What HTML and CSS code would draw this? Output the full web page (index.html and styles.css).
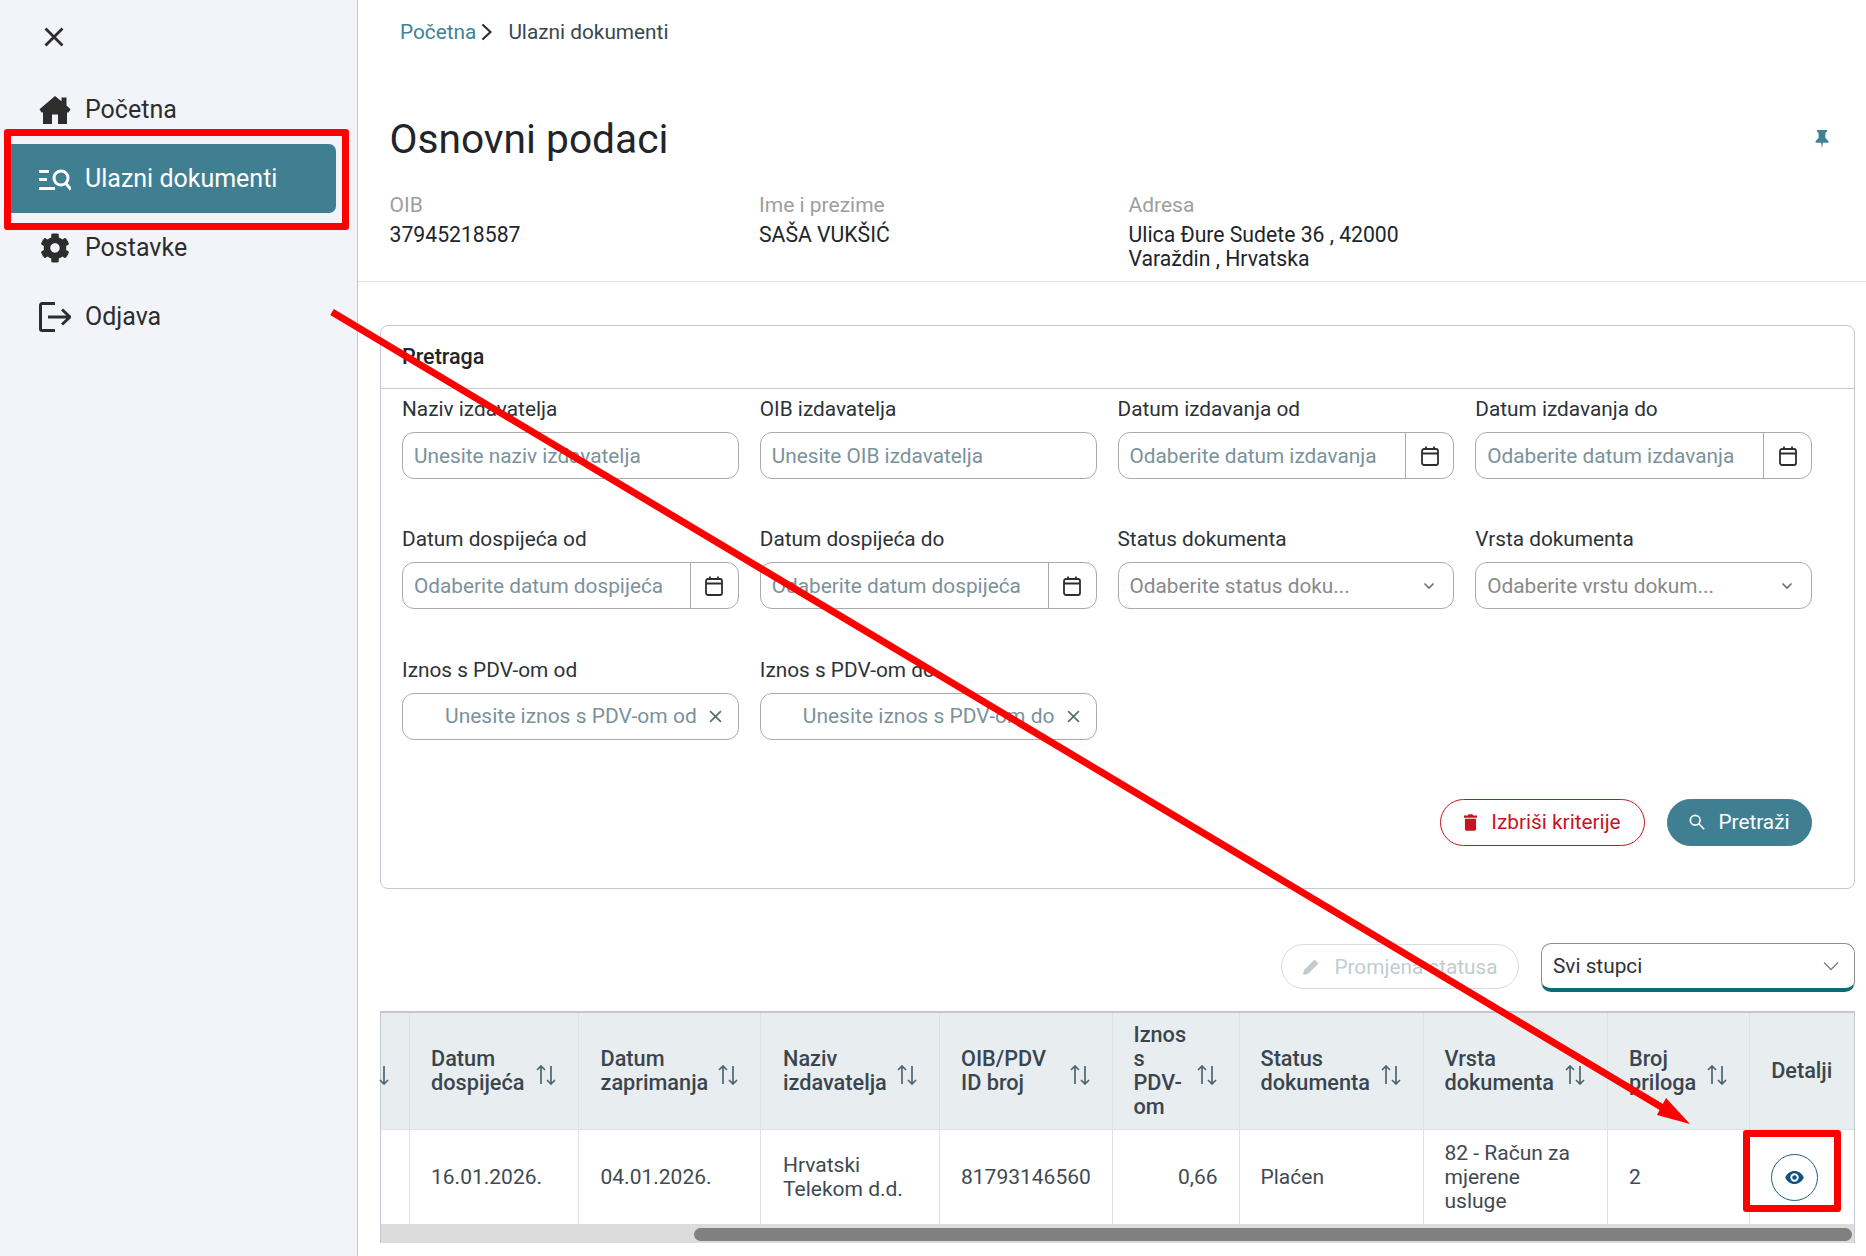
FILE: index.html
```html
<!DOCTYPE html>
<html lang="hr">
<head>
<meta charset="utf-8">
<title>Ulazni dokumenti</title>
<link rel="stylesheet" href="styles.css">
</head>
<body>
<aside class="sidebar">
  <button class="close-btn" aria-label="Zatvori">
    <svg class="ico-close" viewBox="0 0 20 20"><path d="M1.500 1.500 18.500 18.500M18.500 1.500 1.500 18.500"/></svg>
  </button>
  <nav class="nav">
    <a class="nav-item">
      <span class="nav-ico"><svg viewBox="0 0 32 28" class="solid"><path d="M16 0 .5 13.200 2.500 16.500H4V28h9v-9.500h6V28h9V16.500h1.500l2-3.300L27.500 9.400V1.500h-5v3.700Z"/></svg></span>
      <span>Početna</span>
    </a>
    <a class="nav-item active">
      <span class="nav-ico"><svg viewBox="0 0 32 26" class="line-white"><path d="M0 5.500h10M0 13.500h8M0 22.500h16"/><circle cx="22" cy="12" r="7"/><path d="M26.500 17 32 23.500"/></svg></span>
      <span>Ulazni dokumenti</span>
    </a>
    <a class="nav-item">
      <span class="nav-ico"><svg viewBox="0 0 512 512" class="solid gear"><path d="M487.400 315.700l-42.600-24.600c4.300-23.200 4.300-47 0-70.200l42.600-24.600c4.900-2.800 7.100-8.600 5.500-14-11.100-35.600-30-67.800-54.700-94.600-3.800-4.100-10-5.100-14.800-2.300L380.800 110c-17.900-15.400-38.500-27.300-60.800-35.100V25.800c0-5.600-3.900-10.500-9.400-11.700-36.700-8.200-74.300-7.800-109.200 0-5.500 1.200-9.400 6.100-9.400 11.700V75c-22.200 7.900-42.800 19.800-60.800 35.100L88.700 85.500c-4.900-2.800-11-1.900-14.800 2.300-24.700 26.700-43.600 58.900-54.700 94.600-1.700 5.400.6 11.200 5.500 14L67.300 221c-4.300 23.200-4.300 47 0 70.200l-42.600 24.600c-4.900 2.800-7.100 8.600-5.500 14 11.100 35.600 30 67.800 54.700 94.600 3.800 4.100 10 5.100 14.800 2.300l42.600-24.600c17.900 15.400 38.500 27.300 60.800 35.100v49.200c0 5.600 3.900 10.500 9.400 11.700 36.700 8.200 74.300 7.800 109.200 0 5.500-1.200 9.400-6.100 9.400-11.700v-49.200c22.200-7.900 42.800-19.800 60.800-35.100l42.600 24.600c4.900 2.800 11 1.900 14.800-2.300 24.700-26.700 43.600-58.900 54.700-94.600 1.500-5.500-.7-11.300-5.600-14.100zM256 336c-44.100 0-80-35.900-80-80s35.900-80 80-80 80 35.900 80 80-35.900 80-80 80z"/></svg></span>
      <span>Postavke</span>
    </a>
    <a class="nav-item">
      <span class="nav-ico"><svg viewBox="0 0 32 30" class="line-dark"><path d="M16 1.500H3a1.500 1.500 0 0 0-1.500 1.500v24a1.500 1.500 0 0 0 1.500 1.500h13"/><path d="M9 15h22M23 7.500 31 15l-8 7.500"/></svg></span>
      <span>Odjava</span>
    </a>
  </nav>
</aside>

<main class="main">
  <div class="breadcrumb">
    <a class="crumb-link">Početna</a>
    <svg class="crumb-sep" viewBox="0 0 11 18"><path d="M1.500 1.500 9.500 9l-8 7.500"/></svg>
    <span>Ulazni dokumenti</span>
  </div>

  <section class="basic">
    <div class="basic-head">
      <h1>Osnovni podaci</h1>
      <svg class="pin" viewBox="0 0 14 18"><path d="M2 0h10v1.600L10.400 3v5l3 3v1.800H8L7 18l-1-5.200H.600V11l3-3V3L2 1.600Z"/></svg>
    </div>
    <dl class="info">
      <div><dt>OIB</dt><dd>37945218587</dd></div>
      <div><dt>Ime i prezime</dt><dd>SAŠA VUKŠIĆ</dd></div>
      <div><dt>Adresa</dt><dd>Ulica Đure Sudete 36 , 42000<br>Varaždin , Hrvatska</dd></div>
    </dl>
  </section>

  <section class="card">
    <div class="card-head">Pretraga</div>
    <div class="card-body">
      <div class="form-grid">
        <div class="field">
          <label>Naziv izdavatelja</label>
          <div class="input"><span class="ph">Unesite naziv izdavatelja</span></div>
        </div>
        <div class="field">
          <label>OIB izdavatelja</label>
          <div class="input"><span class="ph">Unesite OIB izdavatelja</span></div>
        </div>
        <div class="field">
          <label>Datum izdavanja od</label>
          <div class="input date"><span class="ph">Odaberite datum izdavanja</span><span class="date-btn"><svg viewBox="0 0 18 20"><path d="M1 5a2 2 0 0 1 2-2h12a2 2 0 0 1 2 2v12a2 2 0 0 1-2 2H3a2 2 0 0 1-2-2ZM1 7.500h16M5 .5V4M13 .5V4"/></svg></span></div>
        </div>
        <div class="field">
          <label>Datum izdavanja do</label>
          <div class="input date"><span class="ph">Odaberite datum izdavanja</span><span class="date-btn"><svg viewBox="0 0 18 20"><path d="M1 5a2 2 0 0 1 2-2h12a2 2 0 0 1 2 2v12a2 2 0 0 1-2 2H3a2 2 0 0 1-2-2ZM1 7.500h16M5 .5V4M13 .5V4"/></svg></span></div>
        </div>
        <div class="field">
          <label>Datum dospijeća od</label>
          <div class="input date"><span class="ph">Odaberite datum dospijeća</span><span class="date-btn"><svg viewBox="0 0 18 20"><path d="M1 5a2 2 0 0 1 2-2h12a2 2 0 0 1 2 2v12a2 2 0 0 1-2 2H3a2 2 0 0 1-2-2ZM1 7.500h16M5 .5V4M13 .5V4"/></svg></span></div>
        </div>
        <div class="field">
          <label>Datum dospijeća do</label>
          <div class="input date"><span class="ph">Odaberite datum dospijeća</span><span class="date-btn"><svg viewBox="0 0 18 20"><path d="M1 5a2 2 0 0 1 2-2h12a2 2 0 0 1 2 2v12a2 2 0 0 1-2 2H3a2 2 0 0 1-2-2ZM1 7.500h16M5 .5V4M13 .5V4"/></svg></span></div>
        </div>
        <div class="field">
          <label>Status dokumenta</label>
          <div class="input select"><span class="ph grey">Odaberite status doku...</span><svg class="chev" viewBox="0 0 12 8"><path d="M1.500 1.500 6 6l4.500-4.500"/></svg></div>
        </div>
        <div class="field">
          <label>Vrsta dokumenta</label>
          <div class="input select"><span class="ph grey">Odaberite vrstu dokum...</span><svg class="chev" viewBox="0 0 12 8"><path d="M1.500 1.500 6 6l4.500-4.500"/></svg></div>
        </div>
        <div class="field">
          <label>Iznos s PDV-om od</label>
          <div class="input amount"><span class="ph">Unesite iznos s PDV-om od</span><svg class="clear" viewBox="0 0 12 12"><path d="M1 1 11 11M11 1 1 11"/></svg></div>
        </div>
        <div class="field">
          <label>Iznos s PDV-om do</label>
          <div class="input amount"><span class="ph">Unesite iznos s PDV-om do</span><svg class="clear" viewBox="0 0 12 12"><path d="M1 1 11 11M11 1 1 11"/></svg></div>
        </div>
      </div>
      <div class="form-actions">
        <button class="btn btn-danger"><svg viewBox="0 0 14 18"><path d="M5 0h4l1 1.500h4v2.300H0V1.500h4ZM1 5h12v11a2 2 0 0 1-2 2H3a2 2 0 0 1-2-2Z"/></svg>Izbriši kriterije</button>
        <button class="btn btn-primary"><svg viewBox="0 0 18 18"><circle cx="7" cy="7" r="5.500"/><path d="M11 11l6 6"/></svg>Pretraži</button>
      </div>
    </div>
  </section>

  <div class="toolbar">
    <button class="btn btn-disabled"><svg viewBox="0 0 18 18"><path d="M12.500 1.500 16.500 5.500 6 16 1 17 2 12Z"/></svg>Promjena statusa</button>
    <div class="columns-select"><span>Svi stupci</span><svg viewBox="0 0 16 10"><path d="M1 1.500 8 8.500l7-7"/></svg></div>
  </div>

  <section class="table">
    <div class="row head">
      <div class="cell first"><svg class="sort only-down" viewBox="0 0 10 20"><path d="M5 1v18M1 15l4 4 4-4"/></svg></div>
      <div class="cell"><span>Datum dospijeća</span><svg class="sort" viewBox="0 0 22 20"><path d="M6 19V1M2 5l4-4 4 4M16 1v18M12 15l4 4 4-4"/></svg></div>
      <div class="cell shift"><span>Datum zaprimanja</span><svg class="sort" viewBox="0 0 22 20"><path d="M6 19V1M2 5l4-4 4 4M16 1v18M12 15l4 4 4-4"/></svg></div>
      <div class="cell shift"><span>Naziv izdavatelja</span><svg class="sort" viewBox="0 0 22 20"><path d="M6 19V1M2 5l4-4 4 4M16 1v18M12 15l4 4 4-4"/></svg></div>
      <div class="cell"><span>OIB/PDV ID broj</span><svg class="sort" viewBox="0 0 22 20"><path d="M6 19V1M2 5l4-4 4 4M16 1v18M12 15l4 4 4-4"/></svg></div>
      <div class="cell"><span>Iznos s PDV-om</span><svg class="sort" viewBox="0 0 22 20"><path d="M6 19V1M2 5l4-4 4 4M16 1v18M12 15l4 4 4-4"/></svg></div>
      <div class="cell"><span>Status dokumenta</span><svg class="sort" viewBox="0 0 22 20"><path d="M6 19V1M2 5l4-4 4 4M16 1v18M12 15l4 4 4-4"/></svg></div>
      <div class="cell"><span>Vrsta dokumenta</span><svg class="sort" viewBox="0 0 22 20"><path d="M6 19V1M2 5l4-4 4 4M16 1v18M12 15l4 4 4-4"/></svg></div>
      <div class="cell"><span>Broj priloga</span><svg class="sort" viewBox="0 0 22 20"><path d="M6 19V1M2 5l4-4 4 4M16 1v18M12 15l4 4 4-4"/></svg></div>
      <div class="cell center">Detalji</div>
    </div>
    <div class="row body">
      <div class="cell first"></div>
      <div class="cell">16.01.2026.</div>
      <div class="cell shift">04.01.2026.</div>
      <div class="cell shift">Hrvatski Telekom d.d.</div>
      <div class="cell">81793146560</div>
      <div class="cell end">0,66</div>
      <div class="cell">Plaćen</div>
      <div class="cell tight">82 - Račun za mjerene usluge</div>
      <div class="cell">2</div>
      <div class="cell center"><button class="eye-btn" aria-label="Detalji"><svg viewBox="0 0 20 14"><path fill-rule="evenodd" d="M10 0C5.500 0 1.800 2.800 0 7c1.800 4.200 5.500 7 10 7s8.200-2.800 10-7c-1.800-4.200-5.500-7-10-7Zm0 11.500a4.500 4.500 0 1 1 0-9 4.500 4.500 0 0 1 0 9Zm0-7a2.500 2.500 0 1 0 0 5 2.500 2.500 0 0 0 0-5Z"/></svg></button></div>
    </div>
    <div class="scrollbar"><div class="thumb"></div></div>
  </section>
</main>

<div class="mark mark-nav"></div>
<div class="mark mark-eye"></div>
<svg class="arrow" viewBox="0 0 1866 1256"><path class="arrow-line" d="M332 312 1668 1111"/><path class="arrow-head" d="M1690 1124 1657 1115 1666 1098Z"/></svg>
</body>
</html>
```
FILE: styles.css
```css
* { box-sizing: border-box; }
html, body { margin: 0; height: 100%; }
body {
  display: flex;
  width: 1866px;
  height: 1256px;
  overflow: hidden;
  position: relative;
  font-family: Roboto, "Liberation Sans", sans-serif;
  font-size: 20.800px;
  line-height: 24px;
  color: #212529;
  background: #fff;
}
button { font: inherit; cursor: pointer; }

/* Sidebar */
.sidebar {
  width: 358px;
  flex: none;
  background: #f3f4fa;
  border-right: 1px solid #c3c5cb;
  padding-top: 27px;
}
.close-btn {
  display: block;
  margin-left: 44px;
  padding: 0;
  width: 20px;
  height: 20px;
  border: 0;
  background: none;
}
.ico-close { display: block; width: 20px; height: 20px; fill: none; stroke: #2d2d2d; stroke-width: 2.800; }
.nav { margin-top: 28px; padding-left: 11px; padding-right: 21px; display: flex; flex-direction: column; }
.nav-item {
  height: 69px;
  display: flex;
  align-items: center;
  gap: 14px;
  padding-left: 28px;
  font-size: 25px;
  color: #2d2d2d;
  border-radius: 0 7px 7px 0;
}
.nav-item.active { background: #407f92; color: #fff; }
.nav-ico { width: 32px; height: 32px; display: flex; align-items: center; justify-content: center; flex: none; }
.nav-ico svg { width: 32px; height: 30px; display: block; }
.solid { fill: #2d2d2d; }
.line-white { fill: none; stroke: #fff; stroke-width: 3; }
.line-dark { fill: none; stroke: #2d2d2d; stroke-width: 3; }

/* Main */
.main { flex: 1; min-width: 0; display: flex; flex-direction: column; }
.breadcrumb {
  height: 64px;
  padding-left: 42px;
  display: flex;
  align-items: center;
  color: #3a4750;
}
.crumb-link { color: #3f8296; }
.crumb-sep { width: 11px; height: 18px; margin: 0 16px 0 5px; fill: none; stroke: #2d2d2d; stroke-width: 2.200; }

.basic { padding: 51px 0 0 31.500px; border-bottom: 1px solid #e0e2e6; height: 218px; flex: none; }
.basic-head { display: flex; justify-content: space-between; align-items: center; height: 48px; padding-right: 37px; }
h1 { margin: 0; font-size: 40.700px; line-height: 48px; font-weight: 400; color: #212529; }
.pin { width: 14px; height: 18px; fill: #3f8296; }
.info { margin: 26px 0 0; display: grid; grid-template-columns: repeat(3, 369.500px); font-size: 21px; }
.info dt { color: #9e9e9e; line-height: 32px; }
.info dd { margin: 2px 0 0; line-height: 24px; color: #212529; font-size: 21.200px; }

/* Search card */
.card {
  margin: 43px 11px 0 22px;
  height: 564px;
  border: 1px solid #c5c8ce;
  border-radius: 8px;
  flex: none;
}
.card-head {
  height: 63px;
  display: flex;
  align-items: center;
  padding-left: 21px;
  font-weight: 500;
  font-size: 21.500px;
  border-bottom: 1px solid #c5c8ce;
}
.card-body { padding: 8px 42px 0 21px; }
.form-grid { display: grid; grid-template-columns: repeat(4, 1fr); column-gap: 21px; row-gap: 48.300px; }
.field label { display: block; margin-bottom: 11px; color: #2d3338; }
.input {
  height: 47px;
  border: 1px solid #a7abb0;
  border-radius: 12px;
  padding-left: 11px;
  display: flex;
  align-items: center;
  color: #7b929b;
  overflow: hidden;
}
.ph { white-space: nowrap; flex: 1; }
.ph.grey { color: #8a8a8a; }
.date-btn {
  width: 48px;
  height: 100%;
  flex: none;
  border-left: 1px solid #a7abb0;
  display: flex;
  align-items: center;
  justify-content: center;
}
.date-btn svg { width: 18px; height: 20px; fill: none; stroke: #2d2d2d; stroke-width: 1.800; }
.select { padding-right: 18px; }
.chev { width: 12px; height: 8px; fill: none; stroke: #6b6f73; stroke-width: 1.600; }
.amount { justify-content: flex-end; padding-right: 16px; }
.amount .ph { flex: none; font-size: 21px; }
.clear { width: 13px; height: 13px; margin-left: 12px; fill: none; stroke: #5d6f76; stroke-width: 1.600; }

.form-actions { margin-top: 59px; display: flex; justify-content: flex-end; gap: 22px; }
.btn {
  height: 47px;
  border-radius: 24px;
  border: 1px solid;
  display: flex;
  align-items: center;
  background: #fff;
  padding: 0;
}
.btn svg { flex: none; }
.btn-danger { width: 205px; justify-content: center; gap: 14px; color: #c8141f; border-color: #c8141f; }
.btn-danger svg { width: 13px; height: 17px; fill: #c8141f; }
.btn-primary { width: 145px; justify-content: center; gap: 13px; color: #fff; background: #407f92; border-color: #407f92; }
.btn-primary svg { width: 16px; height: 16px; fill: none; stroke: #fff; stroke-width: 1.800; }

/* Toolbar */
.toolbar { margin: 54px 11px 0 0; display: flex; justify-content: flex-end; align-items: flex-start; gap: 22px; height: 68px; flex: none; }
.btn-disabled { width: 238px; height: 45px; margin-top: 1px; justify-content: center; gap: 14px; color: #c3ccd1; border-color: #d6dcdf; }
.btn-disabled svg { width: 18px; height: 18px; fill: #c3ccd1; }
.columns-select {
  width: 314px;
  height: 49px;
  border: 1px solid #8a8f93;
  border-bottom: 4px solid #0f6b72;
  border-radius: 10px;
  padding: 0 15px 0 11px;
  display: flex;
  align-items: center;
  justify-content: space-between;
  color: #2d3338;
}
.columns-select svg { width: 16px; height: 10px; fill: none; stroke: #7b8085; stroke-width: 1.300; }

/* Table */
.table {
  margin: 0 11px 0 22px;
  height: 232px;
  border: 1px solid #c5c8ce;
  border-top-width: 2px;
  display: flex;
  flex-direction: column;
  font-size: 21px;
  color: #3f4a52;
  flex: none;
}
.row {
  display: grid;
  flex: none;
  grid-template-columns: 29px 168.500px 182.500px 179px 172.500px 127px 184px 184.500px 141.500px 1fr;
}
.row.head { height: 117px; background: #e8edf0; border-bottom: 1px solid #dbe0e4; font-weight: 500; font-size: 21.700px; color: #3a464f; }
.row.body { height: 94px; }
.cell {
  padding: 0 21px;
  border-right: 1px solid #dde2e6;
  display: flex;
  align-items: center;
  justify-content: space-between;
  min-width: 0;
}
.cell:last-child { border-right: 0; }
.first { padding: 0; justify-content: flex-start; }
.shift { padding-left: 22px; }
.tight { padding-right: 30px; }
.head .cell > span { display: block; max-width: 100px; }
.head .cell:nth-child(3) > span { max-width: 112px; }
.head .cell:nth-child(4) > span { max-width: 112px; }
.head .cell:nth-child(6) > span { max-width: 54px; }
.head .cell:nth-child(7) > span, .head .cell:nth-child(8) > span { max-width: 118px; }
.head .cell:nth-child(9) > span { max-width: 68px; }
.sort {
  width: 22px;
  height: 20px;
  flex: none;
  margin-top: 8px;
  fill: none;
  stroke: #4d6470;
  stroke-width: 1.700;
}
.sort.only-down { width: 10px; margin-left: -2px; }
.end { justify-content: flex-end; }
.center { justify-content: center; padding: 0; text-align: center; }
.eye-btn {
  width: 47px;
  height: 47px;
  margin-right: 14px;
  border-radius: 50%;
  border: 1px solid #1f5f85;
  background: #fff;
  padding: 0;
  display: flex;
  align-items: center;
  justify-content: center;
}
.eye-btn svg { width: 19px; height: 13px; fill: #14517f; }
.scrollbar { flex: 1; background: #dcdcdc; padding: 4px 2px 2px 313px; }
.thumb { height: 13px; border-radius: 7px; background: #808080; }

/* Annotations drawn over the screenshot */
.mark { position: absolute; border: 7px solid #f00; border-radius: 3px; pointer-events: none; }
.mark-nav { left: 4px; top: 129px; width: 345px; height: 101px; }
.mark-eye { left: 1743px; top: 1130px; width: 98px; height: 82px; }
.arrow { position: absolute; left: 0; top: 0; width: 1866px; height: 1256px; pointer-events: none; }
.arrow-line { fill: none; stroke: #f00; stroke-width: 7; }
.arrow-head { fill: #f00; }
```
